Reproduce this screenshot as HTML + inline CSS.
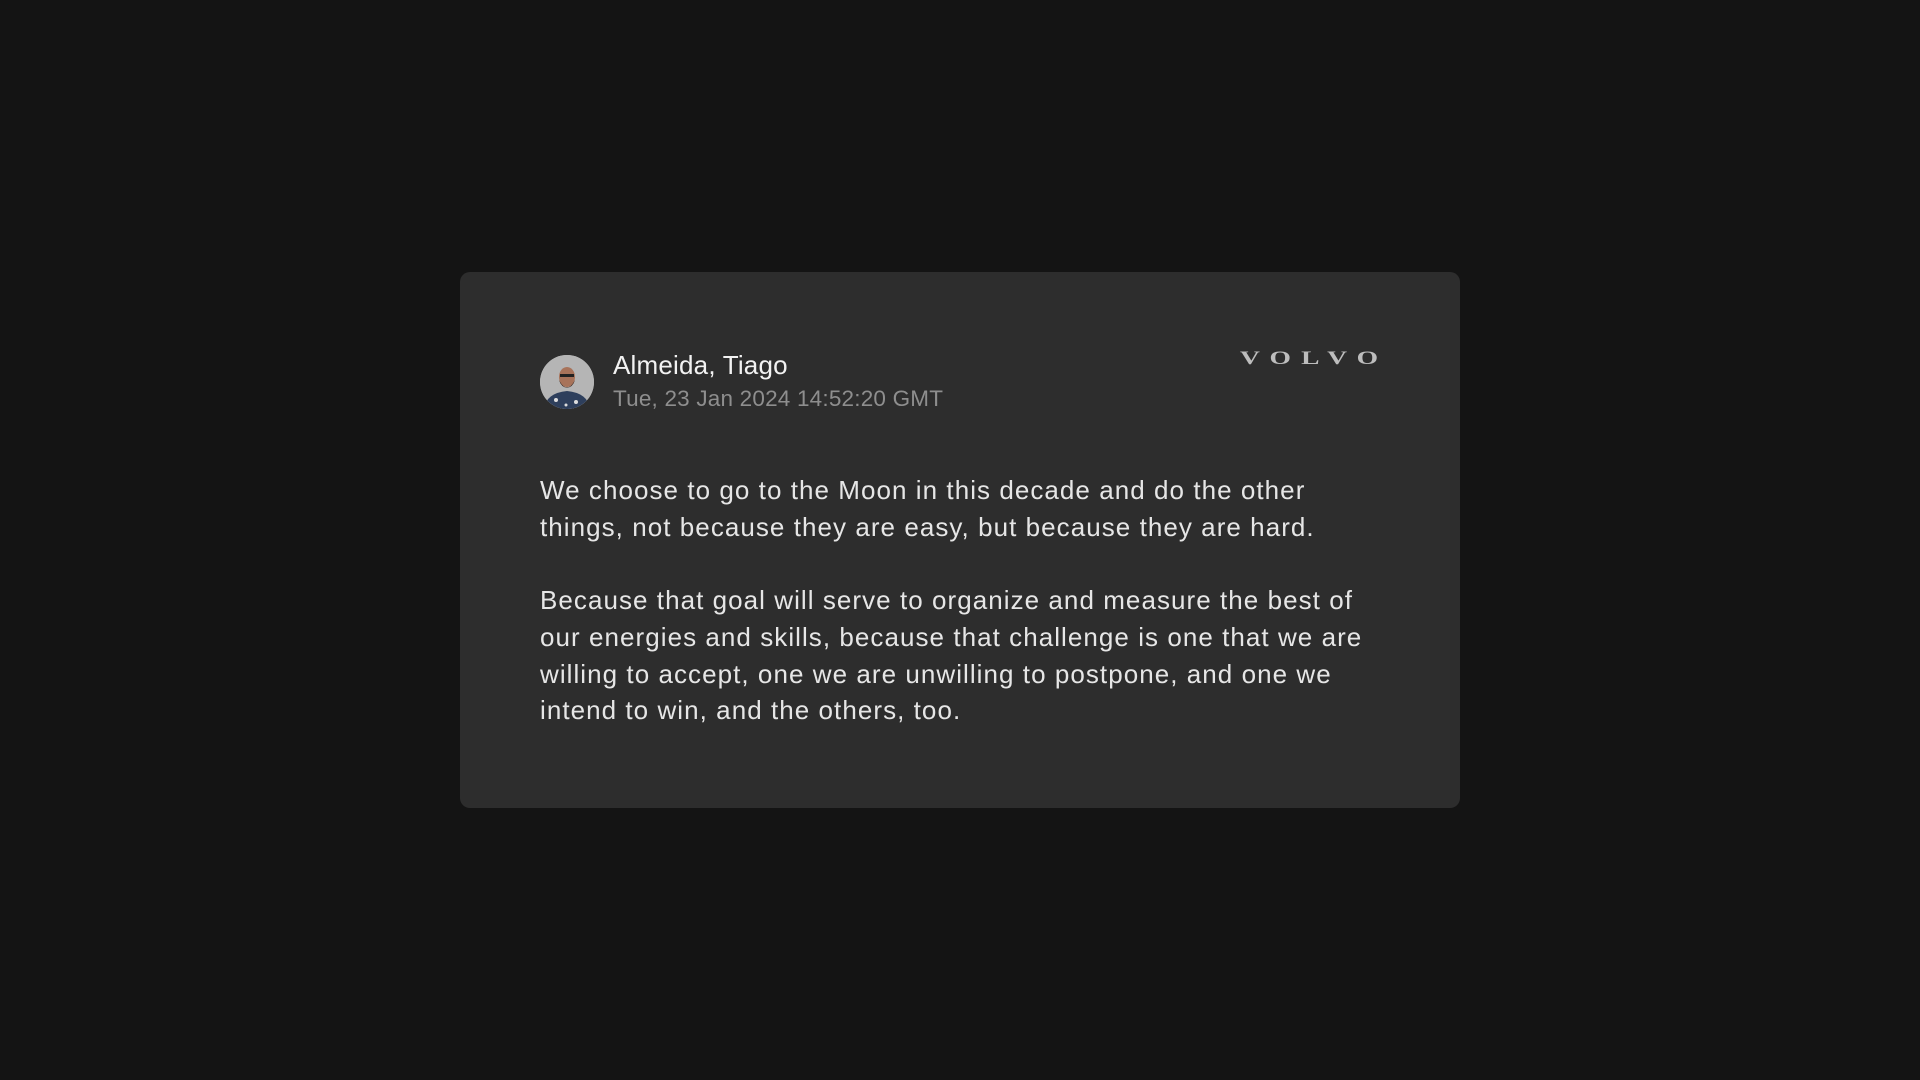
<!DOCTYPE html>
<html><head><meta charset="utf-8"><style>
body{margin:0;width:1920px;height:1080px;background:#141414;font-family:"Liberation Sans",sans-serif;position:relative;overflow:hidden}
.card{position:absolute;left:460px;top:272px;width:1000px;height:536px;background:#2d2d2d;border-radius:10px}
.av{position:absolute;left:80px;top:83px;width:54px;height:54px;border-radius:50%;background:#b9b9b9;overflow:hidden}
.name{position:absolute;left:153px;top:78px;font-size:26px;color:#f2f2f2;letter-spacing:0.2px}
.date{position:absolute;left:153px;top:114px;font-size:22.5px;color:#8e8e8e;letter-spacing:0.2px}
.logo{position:absolute;left:780px;top:76px;font-family:"Liberation Serif",serif;font-weight:bold;font-size:19px;color:#bdbdbd;letter-spacing:7px;transform:scaleX(1.45);transform-origin:0 0;white-space:nowrap}
.body{position:absolute;left:80px;top:200px;width:900px;font-size:26px;line-height:36.7px;color:#e6e6e6;letter-spacing:1.05px;white-space:nowrap}
.body p{margin:0 0 36.7px}
</style></head><body>
<div class="card">
<div class="av"><svg width="54" height="54" viewBox="0 0 54 54"><rect width="54" height="54" fill="#b5b5b5"/><path d="M4 54 Q6 38 27 36 Q48 38 50 54Z" fill="#2e3f5c"/><circle cx="16" cy="45" r="2" fill="#ddd"/><circle cx="36" cy="47" r="2" fill="#ddd"/><circle cx="26" cy="50" r="1.5" fill="#ddd"/><ellipse cx="27" cy="22" rx="8" ry="10" fill="#a8735a"/><path d="M19 25 Q27 40 35 25 Q33 32 27 33 Q21 32 19 25Z" fill="#3a2a22"/><rect x="20" y="19" width="14" height="3" fill="#222"/></svg></div>
<div class="name">Almeida, Tiago</div>
<div class="date">Tue, 23 Jan 2024 14:52:20 GMT</div>
<div class="logo">VOLVO</div>
<div class="body"><p>We choose to go to the Moon in this decade and do the other<br>things, not because they are easy, but because they are hard.</p><p>Because that goal will serve to organize and measure the best of<br>our energies and skills, because that challenge is one that we are<br>willing to accept, one we are unwilling to postpone, and one we<br>intend to win, and the others, too.</p></div>
</div>
</body></html>
